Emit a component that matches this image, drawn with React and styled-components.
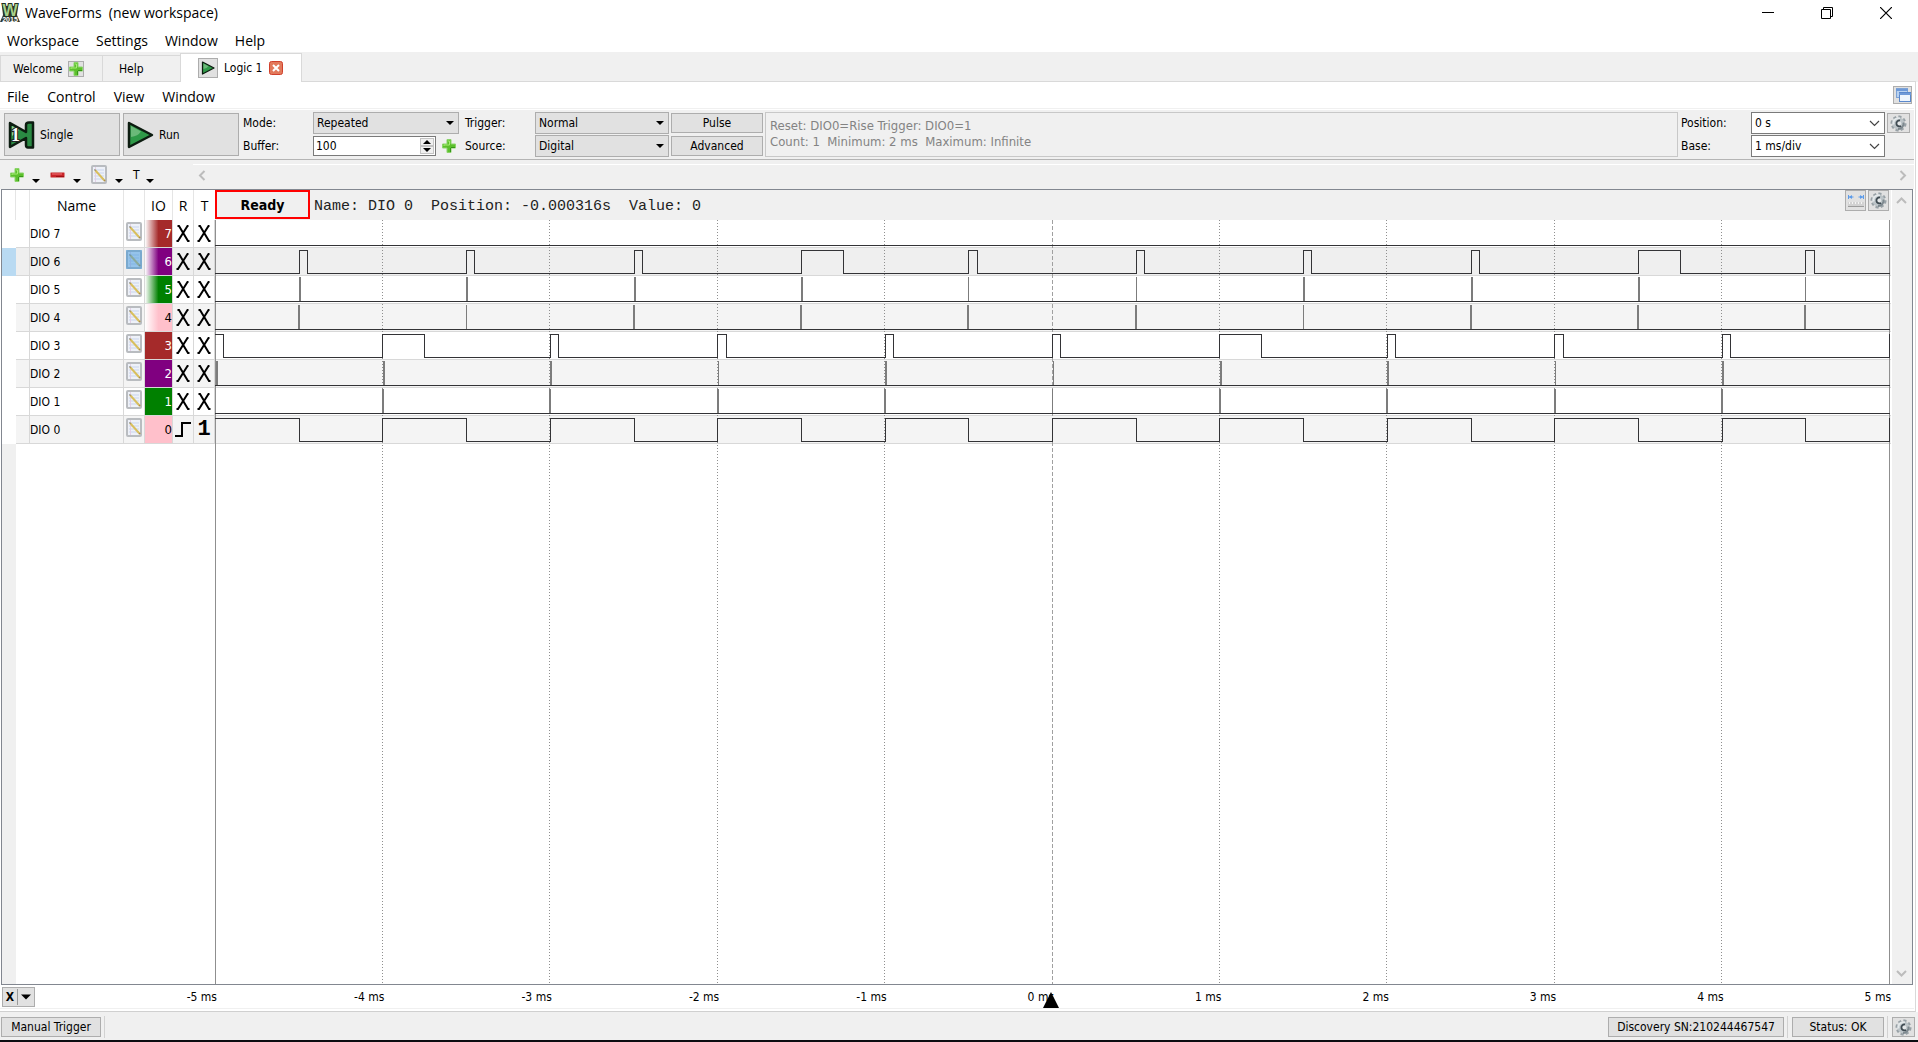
import { useState } from "react"
import styled, { createGlobalStyle } from "styled-components"

const CHANNELS = [
  { id: 7, color: "#a52a2a", fade: true, text: "#fff" },
  { id: 6, color: "#800080", fade: true, text: "#fff" },
  { id: 5, color: "#008000", fade: true, text: "#fff" },
  { id: 4, color: "#ffc0cb", fade: true, text: "#000" },
  { id: 3, color: "#a52a2a", text: "#fff" },
  { id: 2, color: "#800080", text: "#fff" },
  { id: 1, color: "#008000", text: "#fff" },
  { id: 0, color: "#ffc0cb", text: "#000", rise: true },
]

const HALF_TICKS = [-4.5, -3.5, -2.5, -1.5, -0.5, 0.5, 1.5, 2.5, 3.5, 4.5]
const TICKS = [-5, -4, -3, -2, -1, 0, 1, 2, 3, 4, 5]

const SHORT = 0.05
const LONG = 0.25

// high intervals in ms, and glitches too short to be drawn as a pulse
const SIGNALS = {
  7: {},
  6: { pulses: HALF_TICKS.map((t) => [t, t + (t === -1.5 || t === 3.5 ? LONG : SHORT)]) },
  5: { glitches: HALF_TICKS, thin: [-0.5, 0.5, 4.5] },
  4: { glitches: HALF_TICKS, shift: -1, thin: [-3.5, 1.5] },
  3: { pulses: TICKS.map((t) => [t, t + (t === -4 || t === 1 ? LONG : SHORT)]) },
  2: { glitches: TICKS.slice(0, -1), shift: 1, thin: [-2, 0, 3] },
  1: { glitches: TICKS.slice(1, -1), thin: [0] },
  0: { pulses: TICKS.map((t) => [t, t + 0.5]) },
}

const PLOT_WIDTH = 1676
const PLOT_END = 1674
const toX = (t) => Math.min(PLOT_END, Math.round(((t + 5) * PLOT_END) / 10))
const toGridX = (t) => Math.floor(((t + 5) * PLOT_END) / 10)

export default function App() {
  const [selected, setSelected] = useState(6)

  return (
    <Window>
      <GlobalStyle />
      <TitleBar />
      <Menu items={["Workspace", "Settings", "Window", "Help"]} />
      <TabBar />
      <Pane>
        <PaneMenu>
          <Menu items={["File", "Control", "View", "Window"]} wide />
          <SmallButton aria-label="Undock"><UndockIcon /></SmallButton>
        </PaneMenu>
        <Toolbar />
        <ChannelToolbar />
        <Frame>
          <ChannelPanel selected={selected} setSelected={setSelected} />
          <Plot selected={selected} />
          <ScrollBar>
            <Chevron dir="up" />
            <Chevron dir="down" />
          </ScrollBar>
        </Frame>
        <TimeAxis />
      </Pane>
      <StatusBar />
    </Window>
  )
}

const TitleBar = () => (
  <TitleContainer>
    <LogoIcon />
    <Title>WaveForms&nbsp; (new workspace)</Title>
    <WindowButton aria-label="Minimize">
      <svg width="12" height="12"><path d="M0 5.5H12" stroke="#000" /></svg>
    </WindowButton>
    <WindowButton aria-label="Restore">
      <svg width="12" height="12" fill="none" stroke="#000">
        <path d="M0.5 2.5H9.5V11.5H0.5ZM2.5 2.5V0.5H11.5V9.5H9.5" />
      </svg>
    </WindowButton>
    <WindowButton aria-label="Close">
      <svg width="12" height="12"><path d="M0 0L12 12M12 0L0 12" stroke="#000" strokeWidth="1.2" /></svg>
    </WindowButton>
  </TitleContainer>
)

const Menu = ({ items, wide }) => (
  <MenuContainer $wide={wide}>
    {items.map((item) => <MenuItem key={item}>{item}</MenuItem>)}
  </MenuContainer>
)

const TabBar = () => (
  <TabContainer>
    <Tab $width={102} $pad={12}>
      <TabName>Welcome</TabName>
      <TabIcon aria-label="New instrument" $size={16}><PlusIcon /></TabIcon>
    </Tab>
    <Tab $width={78} $pad={16}>
      <TabName>Help</TabName>
    </Tab>
    <Tab $width={122} $pad={17} $active>
      <TabIcon aria-label="Run Logic 1" $size={20}><PlayIcon size={14} /></TabIcon>
      <TabName>Logic 1</TabName>
      <CloseButton aria-label="Close Logic 1">
        <svg width="14" height="14">
          <rect x="0.5" y="0.5" width="13" height="13" rx="2" fill="#e2795b" stroke="#d0402c" />
          <path d="M4 4L10 10M10 4L4 10" stroke="#fff" strokeWidth="2" />
        </svg>
      </CloseButton>
    </Tab>
    <TabRest />
  </TabContainer>
)

const Combo = ({ id, value, editable }) => (
  <ComboContainer>
    <Select id={id} defaultValue={value} $editable={editable}>
      <option>{value}</option>
    </Select>
    <ComboArrow>
      {editable ? <Chevron dir="down" color="#444" /> : <Arrow />}
    </ComboArrow>
  </ComboContainer>
)

const Toolbar = () => (
  <ToolbarContainer>
    <RunGroup>
      <RunButton><SingleIcon />Single</RunButton>
      <RunButton><PlayIcon size={28} />Run</RunButton>
    </RunGroup>
    <FieldGrid $field={146}>
      <label htmlFor="mode">Mode:</label>
      <Combo id="mode" value="Repeated" />
      <label htmlFor="buffer">Buffer:</label>
      <BufferField>
        <SpinBox>
          <SpinInput id="buffer" defaultValue="100" />
          <SpinButtons>
            <SpinButton aria-label="Increase"><Arrow up /></SpinButton>
            <SpinButton aria-label="Decrease"><Arrow /></SpinButton>
          </SpinButtons>
        </SpinBox>
        <FlatButton aria-label="Add buffer"><PlusIcon /></FlatButton>
      </BufferField>
    </FieldGrid>
    <TriggerGroup>
      <FieldGrid $field={134}>
        <label htmlFor="trigger">Trigger:</label>
        <Combo id="trigger" value="Normal" />
        <label htmlFor="source">Source:</label>
        <Combo id="source" value="Digital" />
      </FieldGrid>
      <ButtonStack>
        <Button>Pulse</Button>
        <Button>Advanced</Button>
      </ButtonStack>
      <TriggerInfo>
        <div>Reset: DIO0=Rise Trigger: DIO0=1</div>
        <div>Count: 1&nbsp; Minimum: 2 ms&nbsp; Maximum: Infinite</div>
      </TriggerInfo>
    </TriggerGroup>
    <FieldGrid $field={134}>
      <label htmlFor="position">Position:</label>
      <Combo id="position" value="0 s" editable />
      <label htmlFor="base">Base:</label>
      <Combo id="base" value="1 ms/div" editable />
    </FieldGrid>
    <ToolbarEnd>
      <GearButton aria-label="Time settings"><GearIcon /></GearButton>
    </ToolbarEnd>
  </ToolbarContainer>
)

const ChannelToolbar = () => (
  <ChannelToolbarContainer>
    <ChannelTools>
      <MenuButton aria-label="Add channel"><PlusIcon /><Arrow /></MenuButton>
      <MenuButton aria-label="Remove channel"><MinusIcon /><Arrow /></MenuButton>
      <MenuButton aria-label="Edit channel"><NoteIcon /><Arrow /></MenuButton>
      <MenuButton $tight>T<Arrow /></MenuButton>
    </ChannelTools>
    <ScrollTrack>
      <Chevron dir="left" />
      <Chevron dir="right" />
    </ScrollTrack>
  </ChannelToolbarContainer>
)

const ChannelPanel = ({ selected, setSelected }) => (
  <PanelContainer>
    <ChannelTable>
      <colgroup>
        {[14, 14, 94, 21, 28, 21, 21].map((w, i) => <Col key={i} $w={w} />)}
      </colgroup>
      <thead>
        <tr>
          <Th /><Th /><Th>Name</Th><Th /><Th>IO</Th><Th>R</Th><Th>T</Th>
        </tr>
      </thead>
      <tbody>
        {CHANNELS.map((ch) => (
          <Row key={ch.id} $id={ch.id} $selected={selected === ch.id} onClick={() => setSelected(ch.id)}>
            <MarkCell $selected={selected === ch.id} />
            <Cell />
            <Cell>DIO {ch.id}</Cell>
            <Cell $center><EditIcon $selected={selected === ch.id}><NoteIcon /></EditIcon></Cell>
            <IoCell $channel={ch}>{ch.id}</IoCell>
            <Cell $center>{ch.rise ? <RiseIcon /> : <CrossIcon />}</Cell>
            <Cell $center>{ch.rise ? <TriggerOne>1</TriggerOne> : <CrossIcon />}</Cell>
          </Row>
        ))}
      </tbody>
    </ChannelTable>
    <PanelRest />
  </PanelContainer>
)

const Plot = ({ selected }) => (
  <PlotContainer>
    <PlotHeader>
      <Ready>Ready</Ready>
      <Readout>{"Name: DIO 0  Position: -0.000316s  Value: 0"}</Readout>
      <SquareButton aria-label="Measure"><RulerIcon /></SquareButton>
      <SquareButton aria-label="Plot settings"><GearIcon /></SquareButton>
    </PlotHeader>
    <PlotArea>
      <GridLines viewBox={`0 0 ${PLOT_WIDTH} 764`} preserveAspectRatio="none" shapeRendering="crispEdges">
        {TICKS.map((t) => (
          <line
            key={t}
            x1={toGridX(t) + 0.5} x2={toGridX(t) + 0.5} y1="0" y2="764"
            stroke={t === 0 ? "#a0a0a0" : "#8f8f8f"}
            strokeDasharray={Math.abs(t) === 5 ? "none" : t === 0 ? "4 2" : "1 2"}
            vectorEffect="non-scaling-stroke"
          />
        ))}
      </GridLines>
      {CHANNELS.map((ch) => (
        <WaveRow key={ch.id} $id={ch.id} $selected={selected === ch.id}>
          <Wave {...SIGNALS[ch.id]} />
        </WaveRow>
      ))}
    </PlotArea>
  </PlotContainer>
)

const Wave = ({ pulses = [], glitches = [], shift = 0, thin = [] }) => {
  let d = "M0 25.5"
  pulses.forEach(([from, to]) => {
    const a = toX(from) + 0.5
    const b = toX(to) + 0.5
    if (from === -5) d = `M0 2.5H${b}V25.5`
    else if (from === 5) d += `H${a}V2`
    else d += `H${a}V2.5H${b}V25.5`
  })
  if (!d.endsWith("V2")) d += `H${PLOT_END + 1}`

  const glitchX = (t) => {
    const x = Number.isInteger(t) ? toGridX(t) : toX(t)
    return shift === -1 && thin.includes(t) ? x : x + shift
  }

  return (
    <WaveSvg viewBox={`0 0 ${PLOT_WIDTH} 27`} preserveAspectRatio="none" shapeRendering="crispEdges">
      {glitches.map((t) => (
        <rect key={t} x={glitchX(t)} y="1" width={thin.includes(t) ? 1 : 2} height="25" fill="#7c7c7c" />
      ))}
      <path d={d} fill="none" stroke="#333336" vectorEffect="non-scaling-stroke" />
    </WaveSvg>
  )
}

const TimeAxis = () => (
  <AxisContainer>
    <AxisStart>
      <AxisButton><b>X</b><AxisDivider /><Arrow big /></AxisButton>
      <span>-5 ms</span>
    </AxisStart>
    {TICKS.slice(1).map((t) => (
      <AxisTick key={t}>
        {t} ms
        {t === 0 && (
          <TriggerMark viewBox="0 0 16 16"><path d="M8 0L16 16H0Z" /></TriggerMark>
        )}
      </AxisTick>
    ))}
  </AxisContainer>
)

const StatusBar = () => (
  <StatusContainer>
    <StatusButton $width={100}>Manual Trigger</StatusButton>
    <Divider />
    <Spacer />
    <StatusButton $width={176}>Discovery SN:210244467547</StatusButton>
    <Divider />
    <StatusButton $width={92}>Status: OK</StatusButton>
    <Divider />
    <GearButton aria-label="Device settings"><GearIcon /></GearButton>
  </StatusContainer>
)

// icons

const Arrow = ({ up, big }) => (
  <svg width={big ? 10 : 8} height={big ? 6 : 4} viewBox="0 0 8 4">
    <path d={up ? "M0 4H8L4 0Z" : "M0 0H8L4 4Z"} />
  </svg>
)

const CHEVRONS = {
  up: "M1 8L5.5 3.5L10 8",
  down: "M1 3L5.5 7.5L10 3",
  left: "M7.5 1L3 5.5L7.5 10",
  right: "M3.5 1L8 5.5L3.5 10",
}

const Chevron = ({ dir, color }) => (
  <svg width="11" height="11" fill="none" stroke={color || "#bcbcbc"} strokeWidth={color ? 1.2 : 2}>
    <path d={CHEVRONS[dir]} />
  </svg>
)

const PlusIcon = () => (
  <svg width="14" height="14">
    <path d="M5 0.5H9V5H13.5V9H9V13.5H5V9H0.5V5H5Z" fill="#5cc02c" stroke="#8bd46a" strokeLinejoin="round" />
    <path d="M6 2H7.5V6H2V7" fill="none" stroke="#a5ec75" />
    <path d="M8.5 9V13M9 8.5H13" stroke="#37961a" />
  </svg>
)

const MinusIcon = () => (
  <svg width="15" height="14">
    <rect x="0.5" y="4.5" width="14" height="5" rx="1" fill="#c92429" stroke="#d88a8a" />
    <path d="M2 6H12" stroke="#f0777a" />
    <path d="M6 8.5H14" stroke="#9d0f14" />
  </svg>
)

const NoteIcon = () => (
  <svg width="16" height="19">
    <rect x="1" y="1" width="14" height="17" rx="1" fill="#eef1f8" stroke="#b9bcc0" strokeWidth="2" />
    <path d="M3 5H13M3 8H13M3 11H13M3 14H13" stroke="#c9d5ee" />
    <path d="M4.5 2V17" stroke="#e3cfe6" />
    <path d="M4 5L13 15" stroke="#d9bf5e" strokeWidth="2" />
    <path d="M3 4L4 6L5 5Z" fill="#777" />
    <path d="M13 15L14 16" stroke="#b09044" strokeWidth="2" />
  </svg>
)

const PlayIcon = ({ size }) => (
  <svg width={size} height={size} viewBox="0 0 28 28">
    <path d="M3 2L26 14L3 26Z" fill="#2f9a48" stroke="#0c1c10" strokeWidth="2.5" strokeLinejoin="round" />
    <path d="M5 5L15 10.5Q12 15 5 16Z" fill="#85c68f" opacity="0.7" />
  </svg>
)

const SingleIcon = () => (
  <svg width="28" height="28" viewBox="0 0 28 28">
    <path d="M3 2L19 11V4Q19 1.500 22 1.5H26V26.5H21Q19 26.5 19 24V17L3 26Z" fill="#2a8a43" stroke="#0c1c10" strokeWidth="2.5" strokeLinejoin="round" />
    <path d="M5 5L12 9L5 15Z" fill="#91c99a" />
    <text x="4" y="20" fontFamily="Liberation Serif, serif" fontWeight="bold" fontSize="18" fill="#fff" stroke="#222" strokeWidth="2" paintOrder="stroke">1</text>
  </svg>
)

const LogoIcon = () => (
  <svg width="20" height="20" viewBox="0 0 20 20">
    <path d="M2 3H18L17 12L20 19H0L3 12Z" fill="#333a33" />
    <text x="10" y="13" textAnchor="middle" fontFamily="Liberation Sans, sans-serif" fontWeight="bold" fontSize="16" fill="#a8d08a" stroke="#233023" strokeWidth="2" paintOrder="stroke">W</text>
    <text x="10" y="19" textAnchor="middle" fontFamily="Liberation Sans, sans-serif" fontWeight="bold" fontSize="7" fill="#fff">2015</text>
  </svg>
)

const UndockIcon = () => (
  <svg width="16" height="16">
    <rect x="1.5" y="1.5" width="11" height="9" fill="#b9d2f0" stroke="#7ea3d6" />
    <path d="M1 3H13" stroke="#6f9ad8" strokeWidth="2" />
    <rect x="4.5" y="5.5" width="11" height="9" fill="#eef5fd" stroke="#5a88cc" />
    <path d="M4 7H16" stroke="#6f9ad8" strokeWidth="2" />
  </svg>
)

const GearIcon = () => (
  <svg width="17" height="17" viewBox="0 0 17 17">
    <g stroke="#98a1a6" strokeWidth="3.2" transform="rotate(12 8.5 8.5)">
      <path d="M8.5 0.5V16.5M0.5 8.5H16.5M3 3L14 14M14 3L3 14" />
    </g>
    <circle cx="8.5" cy="8.5" r="6" fill="#bcc4c8" />
    <path d="M3.500 9.5A5 5 0 0 1 10 3.5" fill="none" stroke="#e4e9eb" strokeWidth="2" />
    <path d="M13.5 7.5A5.500 5.500 0 0 1 8 14" fill="none" stroke="#7d888e" strokeWidth="2" />
    <circle cx="9" cy="8.5" r="2.2" fill="#e4e7e8" />
    <path d="M10 5.5A3 3 0 1 0 11 11" fill="none" stroke="#3f4b52" strokeWidth="1.8" />
  </svg>
)

const RulerIcon = () => (
  <svg width="16" height="16">
    <path d="M0.5 2V6M15.5 2V6M1 4H5.5M10.5 4H15" stroke="#5c9bea" />
    <path d="M1 4L4 2V6ZM15 4L12 2V6Z" fill="#5c9bea" />
    <path d="M0 9H16V14H0Z" fill="#d2d2d2" />
    <path d="M0 13.5H16" stroke="#9c9c9c" />
    <path d="M1.5 9V11M4.5 9V11M7.5 9V11M10.5 9V11M13.5 9V11" stroke="#f4f4f4" />
  </svg>
)

const CrossIcon = () => (
  <svg width="14" height="17">
    <path d="M1.5 1H3L12 16H13.5M12.5 1H11.5L2 16H0.5" fill="none" stroke="#000" strokeWidth="2" />
  </svg>
)

const RiseIcon = () => (
  <svg width="16" height="17">
    <path d="M0 15H7V2H16" fill="none" stroke="#000" strokeWidth="2" />
  </svg>
)

const GlobalStyle = createGlobalStyle`
  * {
    box-sizing: border-box;
  }

  body {
    margin: 0;
    background: #fff;
    color: #000;
    font-family: "DejaVu Sans Condensed", "DejaVu Sans", sans-serif;
    font-size: 12px;
    line-height: 16px;
  }

  button, input, select {
    margin: 0;
    padding: 0;
    font: inherit;
    color: inherit;
  }

  svg {
    display: block;
    flex: none;
  }
`

const Window = styled.div`
  display: flex;
  flex-direction: column;
  min-height: 100vh;
  border-bottom: 2px solid #0c0c10;
`

const TitleContainer = styled.header`
  display: flex;
  align-items: center;
  height: 26px;
  padding-right: 8px;
`

const Title = styled.h1`
  flex: 1;
  margin: 0 0 0 5px;
  font: 400 14px/20px "Open Sans", sans-serif;
`

const WindowButton = styled.button`
  display: flex;
  align-items: center;
  justify-content: center;
  width: 48px;
  height: 24px;
  margin-left: 11px;
  border: none;
  background: none;
`

const MenuContainer = styled.nav`
  display: flex;
  align-items: center;
  gap: ${props => props.$wide ? 18 : 17}px;
  height: 26px;
  padding: 4px 7px 0;
`

const MenuItem = styled.button`
  border: none;
  background: none;
  font: 400 14px/20px "Open Sans", sans-serif;
`

const TabContainer = styled.div`
  display: flex;
  height: 30px;
  background: #f0f0f0;
`

const Tab = styled.div`
  display: flex;
  align-items: center;
  gap: 6px;
  width: ${props => props.$width}px;
  margin-top: ${props => props.$active ? 1 : 3}px;
  padding-left: ${props => props.$pad}px;
  border: 1px solid #d9d9d9;
  ${props => props.$active ? `
    border-bottom: none;
    background: #fff;
  ` : `
    border-right: none;
  `}
`

const TabName = styled.button`
  border: none;
  background: none;
`

const TabIcon = styled.button`
  display: flex;
  align-items: center;
  justify-content: center;
  width: ${props => props.$size}px;
  height: ${props => props.$size}px;
  border: 1px solid #adadad;
  background: #e1e1e1;
`

const CloseButton = styled.button`
  border: none;
  background: none;
`

const TabRest = styled.div`
  flex: 1;
  margin-right: 2px;
  border-bottom: 1px solid #d9d9d9;
`

const Pane = styled.main`
  display: flex;
  flex: 1;
  flex-direction: column;
  margin-right: 2px;
  padding-right: 1px;
  border-right: 1px solid #d9d9d9;
  border-bottom: 1px solid #d0d0d0;
`

const PaneMenu = styled.div`
  display: flex;
  align-items: center;
  justify-content: space-between;
  height: 27px;
  padding-right: 2px;
  border-bottom: 1px solid #f0f0f0;
`

const SmallButton = styled.button`
  display: flex;
  align-items: center;
  justify-content: center;
  width: 19px;
  height: 18px;
  border: 1px solid #adadad;
  background: #e1e1e1;
`

const ToolbarContainer = styled.div`
  display: flex;
  margin-top: 1px;
  padding: 2px 0 2px 4px;
  border-bottom: 1px solid #b4b4b4;
  background: #f0f0f0;
`

const RunGroup = styled.div`
  display: flex;
  gap: 3px;
  margin-right: 4px;
  padding: 1px 0;
`

const RunButton = styled.button`
  display: flex;
  align-items: center;
  gap: 5px;
  width: 116px;
  padding-left: 2px;
  border: 1px solid #adadad;
  background: #e1e1e1;
`

const FieldGrid = styled.div`
  display: grid;
  grid-template-columns: 70px ${props => props.$field}px;
  grid-template-rows: 22px 22px;
  row-gap: 1px;
  align-items: center;
`

const ComboContainer = styled.div`
  display: flex;
  position: relative;
`

const Select = styled.select`
  appearance: none;
  width: 100%;
  height: 22px;
  padding-left: 3px;
  border: 1px solid ${props => props.$editable ? "#7a7a7a" : "#adadad"};
  border-radius: 0;
  background: ${props => props.$editable ? "#fff" : "#e1e1e1"};
`

const ComboArrow = styled.span`
  display: flex;
  align-items: center;
  position: absolute;
  top: 0;
  right: 5px;
  height: 22px;
  pointer-events: none;
`

const BufferField = styled.div`
  display: flex;
  align-items: center;
  gap: 6px;
  min-width: 0;
`

const SpinBox = styled.div`
  display: flex;
  flex: 1;
  min-width: 0;
  height: 20px;
  padding: 1px;
  border: 1px solid #7a7a7a;
  background: #fff;
`

const SpinInput = styled.input`
  flex: 1;
  width: 100%;
  min-width: 0;
  padding-left: 1px;
  border: none;
  background: none;
`

const SpinButtons = styled.div`
  display: flex;
  flex: none;
  flex-direction: column;
  width: 14px;
`

const SpinButton = styled.button`
  display: flex;
  flex: 1;
  align-items: center;
  justify-content: center;
  border: 1px solid #c4c4c4;
  background: #f0f0f0;
`

const FlatButton = styled.button`
  margin-right: 3px;
  border: none;
  background: none;
`

const TriggerGroup = styled.div`
  display: flex;
  flex: 1;
  gap: 2px;
  margin: 0 3px 0 6px;
`

const ButtonStack = styled.div`
  display: flex;
  flex-direction: column;
  gap: 3px;
  padding: 1px 0;
`

const Button = styled.button`
  width: 92px;
  height: 20px;
  border: 1px solid #adadad;
  background: #e1e1e1;
`

const TriggerInfo = styled.div`
  flex: 1;
  padding: 5px 4px;
  border: 1px solid #c8c8c8;
  color: #838383;
  font-size: 13px;
`

const ToolbarEnd = styled.div`
  padding: 1px 4px 0 2px;
`

const GearButton = styled.button`
  display: flex;
  align-items: center;
  justify-content: center;
  width: 23px;
  height: 20px;
  border: 1px solid #adadad;
  background: #e1e1e1;
`

const ChannelToolbarContainer = styled.div`
  display: flex;
  height: 29px;
  background: #f0f0f0;
`

const ChannelTools = styled.div`
  display: flex;
  align-items: center;
  gap: 10px;
  width: 193px;
  padding-left: 10px;
`

const MenuButton = styled.button`
  display: flex;
  align-items: center;
  gap: ${props => props.$tight ? 6 : 8}px;
  height: 20px;
  border: none;
  background: none;
  svg:last-child {
    margin-top: 12px;
  }
`

const ScrollTrack = styled.div`
  display: flex;
  flex: 1;
  align-items: center;
  justify-content: space-between;
  margin-top: 4px;
  padding: 0 6px 4px 4px;
  border-top: 1px solid #fff;
`

const Frame = styled.div`
  display: flex;
  flex: 1;
  margin: 0 1px;
  border: 1px solid #828790;
`

const PanelContainer = styled.div`
  display: flex;
  flex-direction: column;
  width: 213px;
`

const ChannelTable = styled.table`
  table-layout: fixed;
  width: 100%;
  border-spacing: 0;
`

const Col = styled.col`
  width: ${props => props.$w}px;
`

const Th = styled.th`
  height: 30px;
  padding: 2px 0 0;
  border-right: 1px solid #e5e5e5;
  font: 400 14px/20px "Open Sans", sans-serif;
  &:last-child {
    border-right: none;
  }
`

const rowColor = ({ $id, $selected }) => $selected ? "#efefef" : $id % 2 ? "#fff" : "#f4f4f4"

const Row = styled.tr`
  background: ${rowColor};
`

const Cell = styled.td`
  height: 28px;
  padding: 0;
  border-right: 1px solid #d8d8d8;
  border-bottom: 1px solid #d8d8d8;
  white-space: nowrap;
  svg {
    margin: ${props => props.$center ? "0 auto" : 0};
  }
`

const MarkCell = styled(Cell)`
  border-right: none;
  border-bottom: none;
  background: ${props => props.$selected ? "#b9daf2" : "#fff"};
`

const IoCell = styled(Cell)`
  text-align: right;
  font-size: 13px;
  color: ${props => props.$channel.text};
  background: ${({ $channel }) => $channel.fade
    ? `linear-gradient(90deg, #fff 0, ${$channel.color} 50%)`
    : $channel.color};
`

const EditIcon = styled.div`
  position: relative;
  margin-bottom: 4px;
  &::after {
    content: "";
    display: ${props => props.$selected ? "block" : "none"};
    position: absolute;
    inset: 0 2px;
    background: rgba(60, 150, 220, 0.5);
  }
`

const TriggerOne = styled.div`
  text-align: center;
  font: 700 22px/26px "Liberation Mono", monospace;
`

const PanelRest = styled.div`
  flex: 1;
  width: 14px;
  background: #f0f0f0;
`

const PlotContainer = styled.section`
  display: flex;
  flex: 1;
  flex-direction: column;
  min-width: 0;
`

const PlotHeader = styled.div`
  display: flex;
  align-items: flex-start;
  gap: 2px;
  height: 30px;
  padding-right: 2px;
  background: #f0f0f0;
`

const Ready = styled.div`
  width: 95px;
  height: 29px;
  border: 2px solid #f00;
  font-size: 14px;
  font-weight: 700;
  line-height: 26px;
  text-align: center;
`

const Readout = styled.div`
  flex: 1;
  padding-left: 2px;
  color: #222;
  font: 15px/34px "Liberation Mono", monospace;
  white-space: pre;
`

const SquareButton = styled.button`
  display: flex;
  align-items: center;
  justify-content: center;
  width: 21px;
  height: 21px;
  border: 1px solid #adadad;
  background: #e1e1e1;
`

const PlotArea = styled.div`
  position: relative;
  flex: 1;
`

const GridLines = styled.svg`
  position: absolute;
  inset: 0;
  width: 100%;
  height: 100%;
`

const WaveRow = styled.div`
  height: 28px;
  border-bottom: 1px solid #d8d8d8;
  background: ${rowColor};
`

const WaveSvg = styled.svg`
  position: relative;
  z-index: 1;
  width: 100%;
  height: 27px;
`

const ScrollBar = styled.div`
  display: flex;
  flex-direction: column;
  align-items: center;
  justify-content: space-between;
  width: 21px;
  padding: 5px 2px 5px 0;
  border-left: 1px solid #fff;
  background: #f0f0f0;
`

const AxisContainer = styled.div`
  display: flex;
  align-items: center;
  height: 24px;
  margin-bottom: 2px;
  padding-right: 23px;
  border-bottom: 1px solid #f0f0f0;
`

const AxisStart = styled.div`
  display: flex;
  align-items: center;
  justify-content: space-between;
  width: 217px;
  padding-left: 2px;
`

const AxisTick = styled.div`
  position: relative;
  flex: 1;
  text-align: right;
`

const TriggerMark = styled.svg`
  position: absolute;
  right: -5px;
  bottom: -3px;
  width: 16px;
  height: 16px;
`

const AxisButton = styled.button`
  display: flex;
  align-items: center;
  justify-content: center;
  gap: 3px;
  width: 33px;
  height: 20px;
  border: 1px solid #adadad;
  background: #e1e1e1;
`

const AxisDivider = styled.i`
  width: 1px;
  height: 16px;
  background: #9a9a9a;
`

const StatusContainer = styled.footer`
  display: flex;
  align-items: center;
  gap: 3px;
  height: 28px;
  padding: 2px 3px 0 1px;
  background: #f0f0f0;
`

const StatusButton = styled(Button)`
  width: ${props => props.$width}px;
`

const Divider = styled.i`
  width: 1px;
  height: 22px;
  margin-right: 1px;
  background: #d2d2d2;
`

const Spacer = styled.div`
  flex: 1;
`
